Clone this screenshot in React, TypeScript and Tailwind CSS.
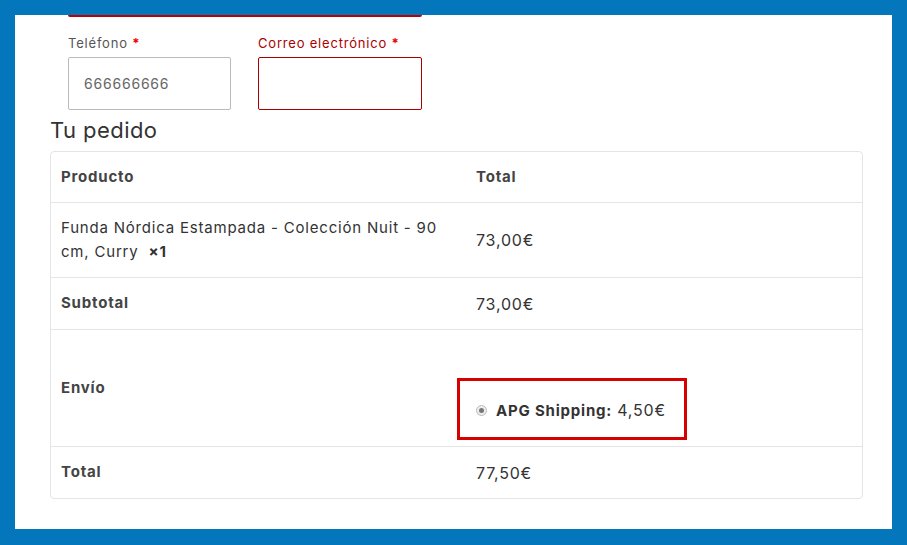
const font = { fontFamily: "Inter, 'Noto Sans', sans-serif" };

const App = () => {
  return (
    <div className="w-[907px] h-[545px] bg-[#0376bc] pt-[15px] pl-[15px] pr-[15px] pb-[16px] overflow-hidden tracking-[0.05em]" style={font}>
      <div className="h-full bg-white pl-[35px] pr-[29px] overflow-hidden">
        {/* top input, cut off */}
        <div className="ml-[18px] w-[354px] h-[2px] border-b-2 border-[#b00] rounded-b-[3px]" />

        {/* phone + email */}
        <div className="flex gap-[27px] ml-[18px] mt-[18px]">
          <div className="flex flex-col">
            <label className="text-[13px] text-[#555] leading-[16px]">
              Teléfono <span className="text-[#e00] font-bold">*</span>
            </label>
            <div className="mt-[6px] w-[163px] h-[53px] border border-[#bbb] rounded-[2px] flex items-center px-[15px] text-[14px] text-[#666]">
              666666666
            </div>
          </div>
          <div className="flex flex-col">
            <label className="text-[13px] text-[#a00] leading-[16px]">
              Correo electrónico <span className="text-[#e00] font-bold">*</span>
            </label>
            <div className="mt-[6px] w-[164px] h-[53px] border border-[#a00] rounded-[2px]" />
          </div>
        </div>

        <h3 className="mt-[7px] text-[22px] leading-[26px] text-[#333] tracking-[0.02em]">Tu pedido</h3>

        {/* order table */}
        <div className="mt-[8px] border border-[#e5e5e5] rounded-[4px] text-[#333]">
          <div className="flex h-[51px] items-center border-b border-[#e5e5e5] text-[15px] font-bold text-[#444]">
            <div className="w-[416px] pl-[10px]">Producto</div>
            <div className="pl-[9px]">Total</div>
          </div>
          <div className="flex h-[75px] items-center border-b border-[#e5e5e5]">
            <div className="w-[416px] pl-[10px] pr-[10px] text-[15px] leading-[24px]">
              Funda Nórdica Estampada - Colección Nuit - 90 cm, Curry&nbsp;&nbsp;<strong className="font-bold">×1</strong>
            </div>
            <div className="pl-[9px] text-[16px]">73,00€</div>
          </div>
          <div className="flex h-[52px] items-center border-b border-[#e5e5e5]">
            <div className="w-[416px] pl-[10px] text-[15px] font-bold text-[#444]">Subtotal</div>
            <div className="pl-[9px] text-[16px]">73,00€</div>
          </div>
          <div className="flex h-[117px] border-b border-[#e5e5e5]">
            <div className="w-[416px] pl-[10px] flex items-center text-[15px] font-bold text-[#444]">Envío</div>
            <div className="flex flex-col justify-end pb-[6px] -ml-[10px]">
              <div className="w-[230px] h-[62px] border-[3px] border-[#d60000] flex items-center pl-[16px] pt-[3px] gap-[9px]">
                <span className="w-[11px] h-[11px] rounded-full border border-[#bbb] bg-[#eee] flex items-center justify-center">
                  <span className="w-[5px] h-[5px] rounded-full bg-[#777]" />
                </span>
                <span className="text-[15px]">
                  <strong className="font-bold">APG Shipping:</strong> <span className="text-[16px]">4,50€</span>
                </span>
              </div>
            </div>
          </div>
          <div className="flex h-[51px] items-center">
            <div className="w-[416px] pl-[10px] text-[15px] font-bold text-[#444]">Total</div>
            <div className="pl-[9px] text-[16px]">77,50€</div>
          </div>
        </div>
      </div>
    </div>
  );
};

export default App;
